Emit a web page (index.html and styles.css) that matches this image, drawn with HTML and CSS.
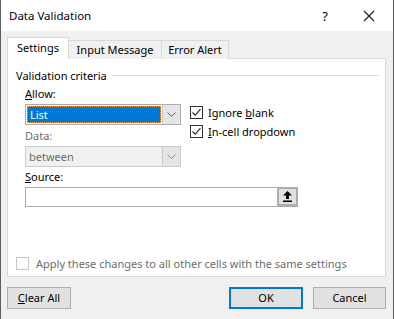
FILE: index.html
```html
<!DOCTYPE html>
<html>
<head>
    <meta charset="utf-8" />
    <title>Data Validation</title>
    <link rel="stylesheet" href="styles.css">
</head>
<body>
<div class="dialog">
    <div class="titlebar">
        <span class="title">Data Validation</span>
        <span class="help">?</span>
        <span class="close">
            <svg width="12" height="12" viewBox="0 0 12 12"><path d="M1 1 L11 11 M11 1 L1 11" stroke="#1a1a1a" stroke-width="1.1" fill="none"/></svg>
        </span>
    </div>
    <div class="body">
        <div class="tabs">
            <div class="tab active">Settings</div>
            <div class="tab wide">Input Message</div>
            <div class="tab">Error Alert</div>
        </div>
        <div class="panel">
            <div class="group">
                <span class="groupTitle">Validation criteria</span>
                <span class="groupLine"></span>
            </div>
            <div class="criteria">
                <div class="leftCol">
                    <div class="label"><u>A</u>llow:</div>
                    <div class="combo focus">
                        <div class="comboValue"><span class="sel">List</span></div>
                        <div class="comboArrow">
                            <svg width="9" height="6" viewBox="0 0 9 6"><path d="M0.5 0.5 L4.5 4.5 L8.5 0.5" stroke="#606060" fill="none"/></svg>
                        </div>
                    </div>
                    <div class="label disabled">Data:</div>
                    <div class="combo off">
                        <div class="comboValue">between</div>
                        <div class="comboArrow">
                            <svg width="9" height="6" viewBox="0 0 9 6"><path d="M0.5 0.5 L4.5 4.5 L8.5 0.5" stroke="#8a8a8a" fill="none"/></svg>
                        </div>
                    </div>
                </div>
                <div class="rightCol">
                    <div class="check">
                        <span class="box"><svg width="11" height="11" viewBox="0 0 11 11"><path d="M1.5 5.5 L4.2 8.2 L9.5 2.2" stroke="#262626" stroke-width="1.1" fill="none"/></svg></span>
                        <span>Ignore <u>b</u>lank</span>
                    </div>
                    <div class="check">
                        <span class="box"><svg width="11" height="11" viewBox="0 0 11 11"><path d="M1.5 5.5 L4.2 8.2 L9.5 2.2" stroke="#262626" stroke-width="1.1" fill="none"/></svg></span>
                        <span><u>I</u>n-cell dropdown</span>
                    </div>
                </div>
            </div>
            <div class="source">
                <div class="label"><u>S</u>ource:</div>
                <div class="sourceInput">
                    <div class="sourceText"></div>
                    <div class="pickButton">
                        <svg width="9" height="11" viewBox="0 0 9 11"><path d="M4.5 0 L9 4.5 L6 4.5 L6 8 L3 8 L3 4.5 L0 4.5 Z" fill="#000"/><rect x="0" y="9.5" width="9" height="1.5" fill="#000"/></svg>
                    </div>
                </div>
            </div>
            <div class="apply">
                <span class="box off"></span>
                <span>Apply these changes to all other cells with the same settings</span>
            </div>
        </div>
        <div class="buttons">
            <div class="buttonClass"><u>C</u>lear All</div>
            <div class="spacer"></div>
            <div class="buttonClass default">OK</div>
            <div class="buttonClass">Cancel</div>
        </div>
    </div>
</div>
</body>
</html>
```

FILE: styles.css
```css
html, body {
    margin: 0; padding: 0; background: #f0f0f0;
}
.dialog {
    width: 394px; height: 319px; box-sizing: border-box;
    border-left: 1px solid #5f5f5f; border-right: 1px solid #5f5f5f;
    font-family: "Noto Sans", "Open Sans", sans-serif; font-size: 11px; color: #000;
    background: #f0f0f0;
    display: flex; flex-direction: column;
}
.titlebar {
    height: 31px; background: #fff;
    display: flex; align-items: center;
    padding-left: 8px;
}
.title {
    flex: 1; font-size: 11.5px;
}
.help {
    width: 14px; margin-right: 31px; text-align: center; font-size: 13px;
}
.close {
    width: 12px; height: 12px; margin-right: 18px; display: flex;
}
.body {
    flex: 1; padding: 7px 7px 0 6px;
}
.tabs {
    display: flex; align-items: flex-end; height: 21px;
}
.tab {
    width: 68px; text-align: center;
    height: 19px; line-height: 18px; box-sizing: border-box;
    border: 1px solid #d9d9d9; border-bottom: none;
    background: #f0f0f0;
    margin-left: -1px;
}
.tab.wide {
    width: 94px;
}
.tab:first-child {
    margin-left: 0;
}
.tab.active {
    width: 62px;
    height: 22px; background: #fff; position: relative; z-index: 1;
    line-height: 20px;
}
.panel {
    height: 219px; box-sizing: border-box;
    border: 1px solid #d9d9d9; background: #fff;
    margin-top: -1px;
    padding: 8px 6px 0 8px;
    display: flex; flex-direction: column;
}
.group {
    display: flex; align-items: center; height: 16px;
}
.groupLine {
    flex: 1; height: 1px; background: #dcdcdc; margin-left: 5px;
}
.criteria {
    display: flex; padding-left: 9px; margin-top: 3px;
}
.leftCol {
    width: 156px;
}
.label {
    height: 16px; line-height: 16px;
}
.label.disabled {
    color: #6d6d6d; margin-top: 3px;
}
.combo {
    height: 21px; box-sizing: border-box; margin-top: 2px;
    display: flex; border: 1px solid #adadad; background: #fff;
}
.comboValue {
    flex: 1; padding: 1px; display: flex;
}
.sel {
    flex: 1; background: #0078d7; color: #fff;
    border: 1px dotted #ffa044; padding-left: 2px; line-height: 15px;
}
.combo.off {
    border-color: #cccccc; background: #f0f0f0; color: #6d6d6d;
}
.combo.off .comboValue {
    padding: 0 0 0 3px; line-height: 19px;
}
.comboArrow {
    width: 17px; background: #e5e5e5; border-left: 1px solid #cccccc;
    display: flex; align-items: center; justify-content: center;
}
.rightCol {
    padding-top: 17px; padding-left: 9px;
}
.check {
    height: 19px; display: flex; align-items: center;
}
.box {
    width: 13px; height: 13px; box-sizing: border-box;
    border: 1px solid #333; background: #fff; margin-right: 5px;
    display: flex; align-items: center; justify-content: center;
}
.box.off {
    border-color: #c6c6c6;
}
.source {
    padding-left: 9px; margin-top: 2px;
}
.sourceInput {
    width: 273px; height: 20px; box-sizing: border-box; margin-top: 2px;
    border: 1px solid #adadad; display: flex; background: #fff;
}
.sourceText {
    flex: 1;
}
.pickButton {
    width: 20px; box-sizing: border-box; background: #e1e1e1;
    border: 2px solid #adadad; border-top-width: 1px; border-right-width: 1px;
    display: flex; align-items: center; justify-content: center;
}
.apply {
    display: flex; align-items: center; color: #6d6d6d;
    margin-top: 48px; height: 16px;
}
.apply .box {
    margin-right: 7px;
}
.buttons {
    display: flex; margin-top: 10px;
}
.spacer {
    flex: 1;
}
.buttonClass {
    width: 64px; height: 22px; box-sizing: border-box;
    border: 1px solid #adadad; background: #e1e1e1;
    text-align: center; line-height: 20px;
}
.buttonClass.default {
    width: 74px; border: 2px solid #0078d7; line-height: 18px; margin-right: 10px;
}
.buttonClass:last-child {
    width: 73px;
}
```
